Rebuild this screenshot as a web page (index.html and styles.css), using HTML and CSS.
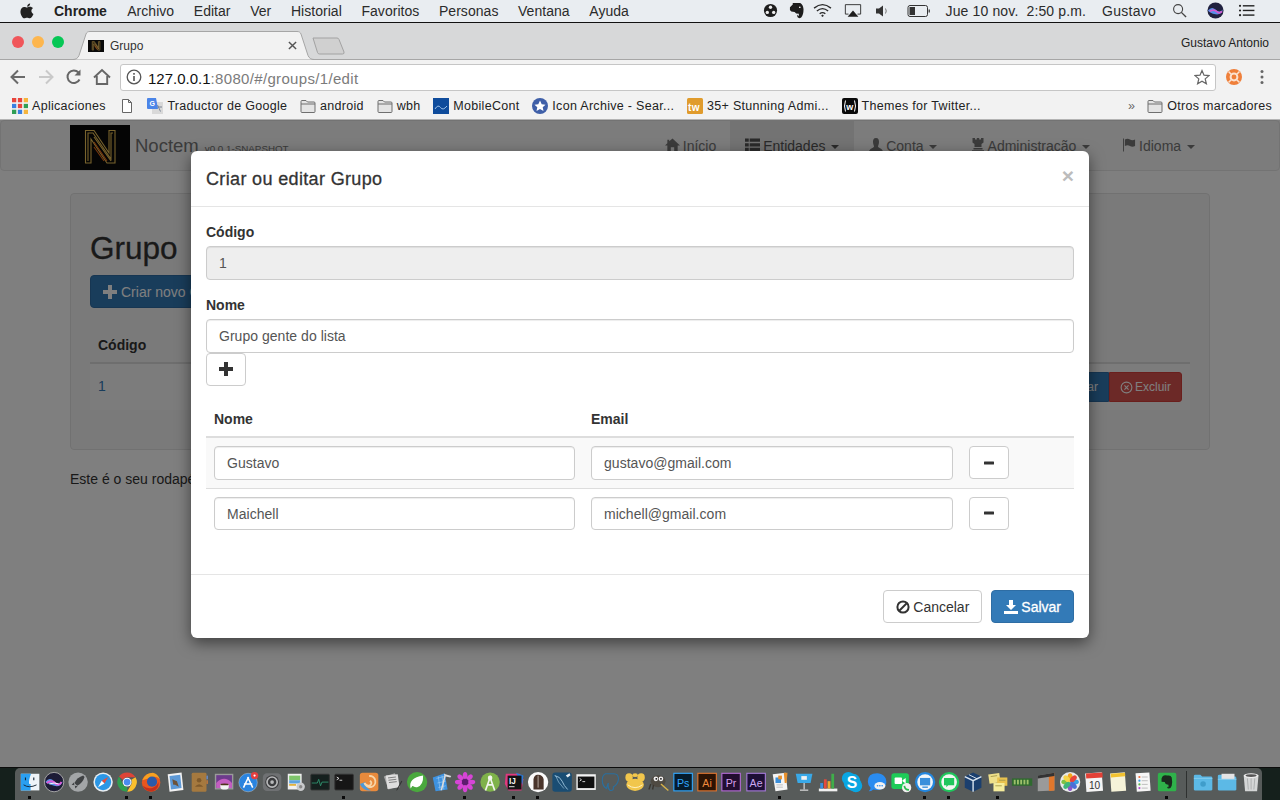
FILE: index.html
```html
<!DOCTYPE html>
<html lang="pt">
<head>
<meta charset="utf-8">
<title>Grupo</title>
<link rel="stylesheet" href="styles.css">
</head>
<body>
<svg class="sprite" width="0" height="0">
  <defs>
    <symbol id="folder" viewBox="0 0 16 14"><path d="M1 12.5V2.5Q1 1.5 2 1.5H6L7.5 3H14Q15 3 15 4V12.5Q15 13.500 14 13.500H2Q1 13.500 1 12.5Z" fill="#e4e4e4" stroke="#6f6f6f"/><path d="M1 5H15" stroke="#6f6f6f" fill="none"/></symbol>
    <symbol id="nlogo" viewBox="0 0 60 45"><rect width="60" height="45" fill="#0a0a0a"/><g fill="none" stroke="#f0c65a" stroke-width="1.100"><path d="M15.500 38V5.500H24L39 28V5.500H45V38H37L21 14V38Z"/><path d="M18 36V8H23L41 34V8H43M24 12L41 36"/></g><path d="M24 17L37 36M24 22L34 36" stroke="#f0701e" stroke-width="1.100" fill="none"/></symbol>
    <symbol id="plus" viewBox="0 0 14 14"><path d="M5 0H9V5H14V9H9V14H5V9H0V5H5Z"/></symbol>
    <symbol id="minus" viewBox="0 0 14 14"><rect x="2" y="5.500" width="10" height="3" rx=".5"/></symbol>
  </defs>
</svg>

<div class="screen">
  <header class="menubar">
    <svg class="apple" viewBox="0 0 16 18"><path d="M11.600 0.500C11.700 2.400 10 4.300 8.200 4.200 8 2.400 9.800 0.600 11.600 0.500ZM8.100 5C9 5 10 4.200 11.600 4.200 12.800 4.200 14 4.800 14.800 5.900 12.200 7.400 12.600 11.200 15.400 12.300 14.500 14.500 12.800 17.400 11.100 17.400 9.900 17.400 9.500 16.600 8 16.600 6.500 16.600 6 17.400 4.900 17.400 2.800 17.400 0.500 13 0.500 9.800 0.500 6.400 2.700 4.300 4.800 4.300 6.200 4.300 7.200 5 8.100 5Z" fill="#222"/></svg>
    <nav class="menus">
      <b>Chrome</b><span>Archivo</span><span>Editar</span><span>Ver</span><span>Historial</span><span>Favoritos</span><span>Personas</span><span>Ventana</span><span>Ayuda</span>
    </nav>
    <div class="status">
      <svg class="st st-ball" viewBox="0 0 16 16"><circle cx="8" cy="8" r="7" fill="#1d1d1d"/><circle cx="8" cy="4.500" r="1.800" fill="#eee"/><circle cx="4.600" cy="10" r="1.800" fill="#eee"/><circle cx="11.400" cy="10" r="1.800" fill="#eee"/></svg>
      <svg class="st st-ele" viewBox="0 0 16 18"><path d="M1 5L4 2V.5H12Q15 2 15.500 7 15.500 13 13 16 10.500 17.500 9 15.500 8.500 14 9 13L10.500 14.500 10.500 12Q7 12 6 10L2.500 9.500 1 8Z" fill="#1d1d1d"/><circle cx="11.500" cy="5" r=".9" fill="#eee"/></svg>
      <svg class="st st-wifi" viewBox="0 0 20 16"><g fill="none" stroke="#2a2a2a" stroke-width="1.500"><path d="M1 5.500Q10 -2 19 5.500"/><path d="M4 8.500Q10 3.500 16 8.500"/><path d="M7 11.500Q10 9 13 11.500"/></g><path d="M8.500 13.500L10 12.300 11.500 13.500 10 15Z" fill="#2a2a2a"/></svg>
      <svg class="st st-air" viewBox="0 0 20 16"><path d="M5 12H1.500V1.500H18.500V12H15" fill="none" stroke="#2a2a2a" stroke-width="1"/><path d="M10 8L16 15H4Z" fill="#1d1d1d"/></svg>
      <svg class="st st-vol" viewBox="0 0 16 16"><path d="M1 5.500H4L8 2.500V13.500L4 10.500H1Z" fill="#333"/><path d="M10.500 5.500Q12 8 10.500 10.500" fill="none" stroke="#777"/></svg>
      <svg class="st st-bat" viewBox="0 0 24 14"><rect x="1" y="1.500" width="19.500" height="11" rx="2" fill="none" stroke="#333"/><rect x="2.500" y="3" width="5.500" height="8" fill="#333"/><rect x="21.500" y="5.500" width="1.500" height="3" fill="#555"/></svg>
      <span class="st-date">Jue 10 nov.&nbsp; 2:50 p.m.</span>
      <span class="st-user">Gustavo</span>
      <svg class="st st-search" viewBox="0 0 16 16"><circle cx="6.500" cy="6.500" r="4.800" fill="none" stroke="#444" stroke-width="1.200"/><path d="M10 10L15 15" stroke="#444" stroke-width="1.500"/></svg>
      <svg class="st st-siri" viewBox="0 0 18 18"><circle cx="9" cy="9" r="8.500" fill="#20213f"/><path d="M1 9Q5 4 9 8T17 8Q15 14 9 13T1 9Z" fill="#5a8ee8"/><path d="M3 10Q7 7 10 10T16 10" stroke="#d55ad0" stroke-width="1.800" fill="none"/></svg>
      <svg class="st st-list" viewBox="0 0 18 14"><g fill="#222"><circle cx="1.500" cy="2" r="1.200"/><circle cx="1.500" cy="7" r="1.200"/><circle cx="1.500" cy="12" r="1.200"/><rect x="4.500" y="1.200" width="12.500" height="1.500"/><rect x="4.500" y="6.200" width="12.500" height="1.500"/><rect x="4.500" y="11.200" width="12.500" height="1.500"/></g></svg>
    </div>
  </header>

  <div class="tabstrip">
    <div class="lights"><i class="red"></i><i class="yellow"></i><i class="green"></i></div>
    <div class="tab">
      <svg class="tab-shape" viewBox="0 0 241 29" preserveAspectRatio="none"><path d="M0 28.500C3 28.500 5 27 6 24.500L13 3C13.700 1.200 15 .5 17 .5H224C226 .5 227.300 1.200 228 3L235 24.500C236 27 238 28.500 241 28.500" fill="#f2f2f2" stroke="#a6a6a6"/></svg>
      <svg class="favicon" viewBox="0 0 60 45"><use href="#nlogo"/></svg>
      <span class="tab-title">Grupo</span>
      <svg class="tab-x" viewBox="0 0 10 10"><path d="M1 1L9 9M9 1L1 9" stroke="#555" stroke-width="1.600"/></svg>
    </div>
    <svg class="newtab" viewBox="0 0 33 18"><path d="M1 1H25Q26.500 1 27 2.500L32 15Q32.500 17 30.500 17H7.500Q6 17 5.500 15.500Z" fill="#d0d0d0" stroke="#a2a2a2"/></svg>
    <span class="profile">Gustavo Antonio</span>
  </div>

  <div class="toolbar">
    <svg class="tb" viewBox="0 0 20 20"><path d="M17 10H4M10 3.500L3.500 10 10 16.500" fill="none" stroke="#6a6a6a" stroke-width="2"/></svg>
    <svg class="tb" viewBox="0 0 20 20"><path d="M3 10H16M10 3.500L16.500 10 10 16.500" fill="none" stroke="#c9c9c9" stroke-width="2"/></svg>
    <svg class="tb" viewBox="0 0 20 20"><path d="M15.500 12.500A6.300 6.300 0 1 1 14.500 5.500" fill="none" stroke="#666" stroke-width="2"/><path d="M16.500 2.500V8.500H10.500Z" fill="#666"/></svg>
    <svg class="tb" viewBox="0 0 20 20"><path d="M2 10.500L10 3 18 10.500M4.800 9V17H15.200V9" fill="none" stroke="#666" stroke-width="1.900"/></svg>
    <div class="omnibox">
      <svg class="info" viewBox="0 0 16 16"><circle cx="8" cy="8" r="6.800" fill="none" stroke="#555" stroke-width="1.300"/><rect x="7.200" y="7" width="1.600" height="5" fill="#555"/><rect x="7.200" y="4" width="1.600" height="1.700" fill="#555"/></svg>
      <span class="url"><span class="url-host">127.0.0.1</span>:8080/#/groups/1/edit</span>
      <svg class="star" viewBox="0 0 16 16"><path d="M8 1.500L10 6.200 15 6.600 11.200 9.900 12.400 14.800 8 12.200 3.600 14.800 4.800 9.900 1 6.600 6 6.200Z" fill="none" stroke="#666" stroke-width="1.200"/></svg>
    </div>
    <svg class="tb" viewBox="0 0 20 20"><circle cx="10" cy="10" r="8" fill="#ef7f3a"/><circle cx="10" cy="10" r="3.400" fill="none" stroke="#fbe2d0" stroke-width="2"/><path d="M4.500 4.500L8 8M15.500 4.500L12 8M4.500 15.500L8 12M15.500 15.500L12 12" stroke="#fbe2d0" stroke-width="1.500"/></svg>
    <svg class="tb" viewBox="0 0 20 20"><g fill="#666"><circle cx="10" cy="4.500" r="1.500"/><circle cx="10" cy="10" r="1.500"/><circle cx="10" cy="15.500" r="1.500"/></g></svg>
  </div>

  <div class="bookmarks">
    <a class="bm"><svg class="bm-i" viewBox="0 0 15 15"><g><rect x="0" y="0" width="4" height="4" fill="#e8453c"/><rect x="5.500" y="0" width="4" height="4" fill="#e8453c"/><rect x="11" y="0" width="4" height="4" fill="#f6b53d"/><rect x="0" y="5.500" width="4" height="4" fill="#3a7fe0"/><rect x="5.500" y="5.500" width="4" height="4" fill="#e8453c"/><rect x="11" y="5.500" width="4" height="4" fill="#2f9e55"/><rect x="0" y="11" width="4" height="4" fill="#2f9e55"/><rect x="5.500" y="11" width="4" height="4" fill="#3a7fe0"/><rect x="11" y="11" width="4" height="4" fill="#f6b53d"/></g></svg><span>Aplicaciones</span></a>
    <a class="bm"><svg class="bm-i" viewBox="0 0 16 16"><path d="M3.500 1.500H9.500L12.500 4.500V14.500H3.500Z M9.500 1.500V4.500H12.500" fill="#fff" stroke="#666"/></svg></a>
    <a class="bm"><svg class="bm-i" viewBox="0 0 16 16"><rect x="5" y="4" width="11" height="12" fill="#d9d9d9"/><path d="M10.500 7L13.500 13.500M9 9H15" stroke="#7a8595"/><path d="M0 1Q0 0 1 0H9L11 11H1Q0 11 0 10Z" fill="#4b85e8"/><text x="2.500" y="8" class="bm-g">G</text></svg><span>Traductor de Google</span></a>
    <a class="bm"><svg class="bm-i"><use href="#folder"/></svg><span>android</span></a>
    <a class="bm"><svg class="bm-i"><use href="#folder"/></svg><span>wbh</span></a>
    <a class="bm"><svg class="bm-i" viewBox="0 0 16 16"><rect width="16" height="16" fill="#0f4c9c"/><path d="M2 11Q5 6 7.500 9.500T14 8" fill="none" stroke="#9dc2ea"/></svg><span>MobileCont</span></a>
    <a class="bm"><svg class="bm-i" viewBox="0 0 16 16"><circle cx="8" cy="8" r="8" fill="#3f5fa8"/><path d="M8 2.500L9.700 6.300 13.500 6.700 10.700 9.300 11.500 13 8 11 4.500 13 5.300 9.300 2.500 6.700 6.300 6.300Z" fill="#fff"/></svg><span>Icon Archive - Sear...</span></a>
    <a class="bm"><svg class="bm-i" viewBox="0 0 16 16"><rect width="16" height="16" rx="1.500" fill="#e09b2c"/><text x="1" y="13" class="bm-tw">tw</text></svg><span>35+ Stunning Admi...</span></a>
    <a class="bm"><svg class="bm-i" viewBox="0 0 16 16"><rect width="16" height="16" rx="2" fill="#0a0a0a"/><text x="8" y="12" class="bm-w">w</text><path d="M3.500 2.500Q1.500 8 3.500 13.500M12.500 2.500Q14.500 8 12.500 13.500" stroke="#fff" fill="none"/></svg><span>Themes for Twitter...</span></a>
    <div class="bm-right">
      <span class="chev">»</span>
      <a class="bm"><svg class="bm-i"><use href="#folder"/></svg><span>Otros marcadores</span></a>
    </div>
  </div>

  <main class="page">
    <div class="navbar">
      <svg class="logo"><use href="#nlogo"/></svg>
      <div class="brand"><span class="brand-name">Noctem</span><small class="brand-ver">v0.0.1-SNAPSHOT</small></div>
      <ul class="navlist">
        <li class="nav-home"><svg class="gl" viewBox="0 0 16 14"><path d="M8 0L16 7.500H13.500V14H9.800V9.500H6.200V14H2.500V7.500H0L2.500 5V1.500H4.500V3Z"/></svg> Início</li>
        <li class="active"><svg class="gl" viewBox="0 0 16 14"><path d="M0 0H4V3.500H0ZM5 0H16V3.500H5ZM0 5H4V8.500H0ZM5 5H16V8.500H5ZM0 10H4V13.500H0ZM5 10H16V13.500H5Z"/></svg> Entidades <i class="caret"></i></li>
        <li><svg class="gl gl-n" viewBox="0 0 14 14"><path d="M7 0C9.500 0 10 2 10 4 10 6 9 8 9 8.500 9 10 14 10.500 14 14H0C0 10.500 5 10 5 8.500 5 8 4 6 4 4 4 2 4.500 0 7 0Z"/></svg> Conta <i class="caret"></i></li>
        <li class="nav-admin"><svg class="gl gl-n" viewBox="0 0 14 14"><path d="M1.500 0H4V1.500H5.800V0H8.200V1.500H10V0H12.500V4.500L10.500 6V9H3.500V6L1.500 4.500ZM2.500 10H11.500V11.500H2.500ZM1 12.300H13V14H1Z"/></svg> Administração <i class="caret"></i></li>
        <li class="nav-lang"><svg class="gl gl-f" viewBox="0 0 14 14"><path d="M0 0H1V14H0ZM2 1Q5 -.5 7.500 1T13 1V8Q10 9.500 7.500 8T2 8Z"/></svg> Idioma <i class="caret"></i></li>
      </ul>
    </div>

    <div class="well">
      <h2 class="page-title">Grupo</h2>
      <button class="btn btn-primary btn-new"><svg class="ic"><use href="#plus"/></svg> Criar novo G</button>
      <div class="list-head"><span>Código</span></div>
      <div class="list-row">
        <a class="link">1</a>
        <div class="row-actions">
          <button class="btn-sm btn-primary">Editar</button>
          <button class="btn-sm btn-danger"><svg class="ic-x" viewBox="0 0 14 14"><circle cx="7" cy="7" r="5.800" fill="none" stroke="currentColor" stroke-width="1.200"/><path d="M4.800 4.800L9.200 9.200M9.200 4.800L4.800 9.200" stroke="currentColor" stroke-width="1.200"/></svg> Excluir</button>
        </div>
      </div>
    </div>
    <p class="foot">Este é o seu rodapé</p>

    <div class="backdrop">
      <section class="modal">
        <div class="modal-header">
          <h4 class="modal-title">Criar ou editar Grupo</h4>
          <span class="close">×</span>
        </div>
        <div class="modal-body">
          <div class="group">
            <label class="lbl">Código</label>
            <div class="input disabled">1</div>
          </div>
          <label class="lbl">Nome</label>
          <div class="input">Grupo gente do lista</div>
          <button class="btn btn-default btn-icon"><svg class="ic ic-dark"><use href="#plus"/></svg></button>
          <table class="members">
            <thead>
              <tr><th class="c1">Nome</th><th class="c2">Email</th><th class="c3"></th></tr>
            </thead>
            <tbody>
              <tr class="odd"><td><div class="input">Gustavo</div></td><td><div class="input">gustavo@gmail.com</div></td><td><button class="btn btn-default btn-icon"><svg class="ic ic-dark"><use href="#minus"/></svg></button></td></tr>
              <tr><td><div class="input">Maichell</div></td><td><div class="input">michell@gmail.com</div></td><td><button class="btn btn-default btn-icon"><svg class="ic ic-dark"><use href="#minus"/></svg></button></td></tr>
            </tbody>
          </table>
        </div>
        <div class="modal-footer">
          <button class="btn btn-default"><svg class="ic ic-dark" viewBox="0 0 14 14"><circle cx="7" cy="7" r="5.600" fill="none" stroke="#333" stroke-width="2"/><path d="M3 11L11 3" stroke="#333" stroke-width="2"/></svg> Cancelar</button>
          <button class="btn btn-primary btn-save"><svg class="ic" viewBox="0 0 14 14"><path d="M5 0H9V5H12L7 10 2 5H5ZM0 11H14V14H0Z"/></svg> Salvar</button>
        </div>
      </section>
    </div>
  </main>

  <footer class="desk">
    <div class="dock">
      <div class="di on"><svg viewBox="0 0 24 24"><rect x="2" y="3" width="20" height="18" fill="#eef3f8"/><path d="M2 3H13Q10 11 11 14H12.500L12.500 21H2Z" fill="#2a9ff0"/><path d="M7 7V10M16 7V10" stroke="#123" stroke-width="1.200"/><path d="M5 15Q11 19 19 15" fill="none" stroke="#123"/></svg></div>
      <div class="di"><svg viewBox="0 0 24 24"><circle cx="12" cy="12" r="10.500" fill="#1d1c36" stroke="#aaa"/><path d="M2.500 12Q7 6 12 11T21.500 11Q19 18 12 16T2.500 12Z" fill="#5c93e8"/><path d="M4 13Q9 9 13 13T20 12" stroke="#e05ad6" stroke-width="2" fill="none"/><path d="M7 14Q12 12 17 14" stroke="#fff" fill="none"/></svg></div>
      <div class="di"><svg viewBox="0 0 24 24"><circle cx="12" cy="12" r="10.500" fill="#a3a6a8"/><path d="M17.500 5Q11 7 8 13L11 16Q17 13 19 6.500Z" fill="#3f4244"/><path d="M7.500 12.500L5 15 8 15.500M11.500 16.500L9 19 8.500 16Z" fill="#3f4244"/></svg></div>
      <div class="di"><svg viewBox="0 0 24 24"><circle cx="12" cy="12" r="10.500" fill="#e8eef2"/><circle cx="12" cy="12" r="8.800" fill="#2b97e6"/><path d="M17.500 6.500L13.500 13.500 10.500 10.500Z" fill="#e74c3c"/><path d="M6.500 17.500L10.500 10.500 13.500 13.500Z" fill="#fff"/></svg></div>
      <div class="di on"><svg viewBox="0 0 24 24"><path d="M12 1.500A10.500 10.500 0 0 1 21.100 6.750H12A5.250 5.250 0 0 0 7.500 9.400L3.300 6Q6.500 1.500 12 1.500Z" fill="#df4437"/><path d="M21.100 6.750A10.500 10.500 0 0 1 12 22.500L16.500 14.600A5.250 5.250 0 0 0 16.500 9.400Z" fill="#fbc02d"/><path d="M12 22.500A10.500 10.500 0 0 1 3.300 6L7.500 14.600A5.250 5.250 0 0 0 12 17.250Z" fill="#2f9e50"/><circle cx="12" cy="12" r="4.800" fill="#fff"/><circle cx="12" cy="12" r="3.700" fill="#4a8cf0"/></svg></div>
      <div class="di on"><svg viewBox="0 0 24 24"><circle cx="12" cy="12.500" r="10" fill="#e8561f"/><path d="M2.500 10Q6 2 14 2 19 3 21.500 9 17 5 13 7 8 8 2.500 10Z" fill="#f6a021"/><circle cx="13" cy="11.500" r="5.500" fill="#2c5aa8"/><path d="M3 16Q8 20 14 18 18 17 20 12 21 19 14 22 6 23 3 16Z" fill="#c4301c"/></svg></div>
      <div class="di"><svg viewBox="0 0 24 24"><path d="M4 3.500L19 1.500 21 20.500 6 22.500Z" fill="#f2f2f2"/><path d="M6 5.500L17.500 4 19 18.500 7.500 20Z" fill="#5d99d6"/><path d="M9 9L14 11 16 17 12 15 10 15Z" fill="#6d5238"/></svg></div>
      <div class="di"><svg viewBox="0 0 24 24"><rect x="4" y="2" width="16" height="20.500" rx="1.500" fill="#a5793f"/><rect x="20" y="5" width="1.500" height="4" fill="#6b8fcf"/><rect x="20" y="10" width="1.500" height="4" fill="#c87a3a"/><circle cx="12" cy="10" r="2.500" fill="#7f5a2c"/><path d="M7.500 17Q12 11.500 16.500 17Z" fill="#7f5a2c"/></svg></div>
      <div class="di"><svg viewBox="0 0 24 24"><rect x="2" y="3" width="20" height="17" fill="#9a9a9a"/><rect x="3.500" y="4.500" width="17" height="14" fill="#6d3b8c"/><path d="M3.500 13Q12 4 20.500 13V18.500H3.500Z" fill="#c45ec0"/><path d="M8 14H17V17Q17 20 14 20H11Q8 20 8 17Z" fill="#f3f3f3"/><ellipse cx="12.500" cy="14.500" rx="4.500" ry="1" fill="#50321c"/></svg></div>
      <div class="di"><svg viewBox="0 0 24 24"><circle cx="12" cy="12.500" r="10" fill="#2a84df" stroke="#bcd" stroke-width=".5"/><path d="M12.500 6.500L7 18M11.500 6.500L17 18M7.500 14H16.500" stroke="#fff" stroke-width="1.700" fill="none"/><circle cx="19" cy="5" r="4" fill="#e43f3f"/><circle cx="19" cy="5" r="1.200" fill="#fff"/></svg></div>
      <div class="di"><svg viewBox="0 0 24 24"><rect x="2" y="2.500" width="20" height="19" rx="4.500" fill="#6f7173"/><circle cx="12" cy="12" r="7.500" fill="#3b3c3e"/><circle cx="12" cy="12" r="5.500" fill="none" stroke="#b8b9ba" stroke-width="1.800"/><circle cx="12" cy="12" r="2" fill="#b8b9ba"/></svg></div>
      <div class="di"><svg viewBox="0 0 24 24"><rect x="3" y="3" width="15" height="17" fill="#f0f0f0"/><rect x="4.500" y="5" width="12" height="5" fill="#7ec46b"/><rect x="4.500" y="10" width="12" height="3.500" fill="#5ca3e0"/><path d="M4.500 15H12" stroke="#e2b23d" stroke-width="2"/><circle cx="17" cy="17" r="4.500" fill="#c8cacc"/><circle cx="17" cy="17" r="1.800" fill="#888"/></svg></div>
      <div class="di"><svg viewBox="0 0 24 24"><rect x="2" y="3.500" width="20" height="17" rx="1" fill="#15201e" stroke="#333"/><path d="M3 13H9L10.500 9 12.500 16 14 12H21" stroke="#2f8f6c" fill="none"/></svg></div>
      <div class="di on"><svg viewBox="0 0 24 24"><rect x="2" y="3.500" width="20" height="17" rx="1" fill="#161616" stroke="#333"/><path d="M4 6.500L6.500 8 4 9.500" stroke="#ddd" fill="none"/><path d="M7 10H10" stroke="#ddd"/></svg></div>
      <div class="di"><svg viewBox="0 0 24 24"><rect x="2" y="2" width="20" height="20" rx="3" fill="#e88a3c"/><path d="M2 14Q6 22 14 21 7 18 8 12Z" fill="#4d98d9"/><path d="M12 5.500A6 6 0 1 1 7 13Q9 17 13 15.500 16 13 13 10.500" fill="none" stroke="#f7d5a8" stroke-width="2"/></svg></div>
      <div class="di"><svg viewBox="0 0 24 24"><path d="M2 6L14 2.500 19 16 7 20Z" fill="#a9a9a9"/><path d="M4 5L17 3.500 19 17.500 6 19.500Z" fill="#dedede"/><path d="M6.500 7.500L15 6.500M7 10L15.500 9M7.500 12.500L16 11.500" stroke="#777"/><path d="M22 11L17 20 15.500 21.500 16 19.500 21 10.500Z" fill="#333"/></svg></div>
      <div class="di"><svg viewBox="0 0 24 24"><circle cx="12" cy="12" r="11" fill="#4aa83e"/><path d="M5 19Q2 8 18.500 5 19 16 12 17.500 9 18 7 16Q11 10 15 9.500 10 11 5 19Z" fill="#fff"/></svg></div>
      <div class="di"><svg viewBox="0 0 24 24"><path d="M3 7L16 2.500 19 20 6 22Z" fill="#3e92e0"/><path d="M7 8L15 6M8 13L17 11M9 18L17 16M9 6L11 21M13 5L15 20" stroke="#a8d2f4" stroke-width=".6"/><path d="M15 3L23 5.500 22 7 17 6 13 21 11.500 20.500 15.500 5Z" fill="#ddd"/></svg></div>
      <div class="di on"><svg viewBox="0 0 24 24"><g fill="#d645d6"><ellipse cx="12" cy="5" rx="2.500" ry="4"/><ellipse cx="12" cy="19" rx="2.500" ry="4"/><ellipse cx="5" cy="12" rx="4" ry="2.500"/><ellipse cx="19" cy="12" rx="4" ry="2.500"/><ellipse cx="7" cy="7" rx="2.500" ry="3.800" transform="rotate(-45 7 7)"/><ellipse cx="17" cy="7" rx="2.500" ry="3.800" transform="rotate(45 17 7)"/><ellipse cx="7" cy="17" rx="2.500" ry="3.800" transform="rotate(45 7 17)"/><ellipse cx="17" cy="17" rx="2.500" ry="3.800" transform="rotate(-45 17 17)"/></g><circle cx="12" cy="12" r="3.500" fill="#5e1b70"/></svg></div>
      <div class="di"><svg viewBox="0 0 24 24"><circle cx="12" cy="12" r="10.500" fill="#7fb24a"/><path d="M7 21L12 7 17 21M8.500 15H15.500" fill="none" stroke="#f2f5ee" stroke-width="1.800"/><circle cx="12" cy="7.500" r="2.500" fill="#f2f5ee"/></svg></div>
      <div class="di on"><svg viewBox="0 0 24 24"><path d="M3 3H18L22 9 20 21H6L2 14Z" fill="#e0397f"/><path d="M14 2L22 5 21 15Z" fill="#2b7bd9"/><rect x="5" y="5" width="15" height="15" fill="#141414"/><text x="6.500" y="14" class="d-ij">IJ</text><rect x="6.500" y="16.500" width="6" height="1" fill="#eee"/></svg></div>
      <div class="di on"><svg viewBox="0 0 24 24"><circle cx="12" cy="12" r="11" fill="#fafafa"/><path d="M7 20V9Q8 3.500 12 4 17 4 18 9V20Z" fill="#4a352b"/><path d="M12 5V18" stroke="#d9cfc8" stroke-width=".8"/></svg></div>
      <div class="di"><svg viewBox="0 0 24 24"><rect x="1.500" y="1.500" width="21" height="21" rx="3" fill="#1a4d73"/><path d="M4 5Q10 6 12 11T18 20" stroke="#9ec5de" stroke-width="1" fill="none"/><path d="M5 5Q7 12 14 19" stroke="#9ec5de" stroke-width=".7" fill="none"/><path d="M16 5L20 2.500 21 4.500 18 7Z" fill="#e8eef2"/></svg></div>
      <div class="di"><svg viewBox="0 0 24 24"><rect x="1.500" y="3.500" width="21" height="17" fill="#f3f3f3"/><rect x="3" y="6" width="18" height="12.500" fill="#101010"/><path d="M5 8L7 9.500 5 11M8 11.500H11" stroke="#ddd" fill="none"/></svg></div>
      <div class="di"><svg viewBox="0 0 24 24"><path d="M6 3Q2 5 2.500 11T7 19Q8 15 9 13 8 19 11 21 15 22 14.500 17 19 15 20 9 20 3 15 3 11 3 6 3Z" fill="none" stroke="#2a6f9e" stroke-width="1.200"/></svg></div>
      <div class="di"><svg viewBox="0 0 24 24"><ellipse cx="12" cy="15" rx="9.500" ry="6.500" fill="#f1c64c"/><ellipse cx="5.500" cy="7" rx="4" ry="4.500" fill="#f1c64c"/><ellipse cx="18.500" cy="7" rx="4" ry="4.500" fill="#f1c64c"/><ellipse cx="12" cy="4.500" rx="3" ry="2" fill="#f1c64c"/><path d="M4 15Q12 21 20 15" stroke="#fff3c4" fill="none"/></svg></div>
      <div class="di"><svg viewBox="0 0 24 24"><ellipse cx="11" cy="11" rx="8" ry="6.500" fill="#4f4a42"/><circle cx="8.500" cy="8.500" r="2.500" fill="#f1f1f1"/><circle cx="14" cy="8.500" r="2.500" fill="#f1f1f1"/><circle cx="9" cy="8.500" r="1" fill="#111"/><circle cx="14" cy="8.500" r="1" fill="#111"/><path d="M14 14L22 21" stroke="#d9b44a" stroke-width="1.500"/><path d="M3 14L1 20M6 15L5 20" stroke="#3a362f" stroke-width="1.500"/></svg></div>
      <div class="di"><svg viewBox="0 0 24 24"><rect x="2" y="2.500" width="20" height="19" fill="#061c2c" stroke="#31a8ff" stroke-width="1.200"/><text x="12" y="17" class="d-ad d-ps">Ps</text></svg></div>
      <div class="di"><svg viewBox="0 0 24 24"><rect x="2" y="2.500" width="20" height="19" fill="#2b1304" stroke="#e0752f" stroke-width="1.200"/><text x="12" y="17" class="d-ad d-ai">Ai</text></svg></div>
      <div class="di"><svg viewBox="0 0 24 24"><rect x="2" y="2.500" width="20" height="19" fill="#230d30" stroke="#b56bd6" stroke-width="1.200"/><text x="12" y="17" class="d-ad d-pr">Pr</text></svg></div>
      <div class="di"><svg viewBox="0 0 24 24"><rect x="2" y="2.500" width="20" height="19" fill="#1d0f36" stroke="#a67ad9" stroke-width="1.200"/><text x="12" y="17" class="d-ad d-ae">Ae</text></svg></div>
      <div class="di on"><svg viewBox="0 0 24 24"><path d="M4 3.500L18 2 20 20 7 22Z" fill="#f4f4f4"/><path d="M16 2H20L19 13 17 13Z" fill="#e8912d"/><rect x="7" y="7" width="6" height="6" fill="#3b8fd9"/><rect x="10" y="5" width="4" height="4" fill="#e8912d"/><path d="M8 15H15M8 17.500H15" stroke="#bbb"/></svg></div>
      <div class="di"><svg viewBox="0 0 24 24"><path d="M3 3H21L19 13H5Z" fill="#39a9e8"/><rect x="9" y="5.500" width="6" height="4" fill="#f1f1f1"/><rect x="11.300" y="13" width="1.500" height="7" fill="#c8c8c8"/><rect x="7.500" y="20" width="9" height="1.500" fill="#c8c8c8"/></svg></div>
      <div class="di"><svg viewBox="0 0 24 24"><rect x="2" y="19" width="20" height="3" fill="#f1f1f1"/><rect x="3.500" y="13" width="3" height="6" fill="#3d8fdc"/><rect x="7.500" y="9" width="3" height="10" fill="#e54a3c"/><rect x="11.500" y="11" width="3" height="8" fill="#f0a92e"/><rect x="15.500" y="3" width="3" height="16" fill="#3fae4a"/></svg></div>
      <div class="di"><svg viewBox="0 0 24 24"><circle cx="8" cy="8" r="7" fill="#0aa6e2"/><circle cx="16" cy="16" r="7" fill="#0aa6e2"/><rect x="3" y="3" width="18" height="18" rx="8" fill="#0aa6e2"/><text x="12" y="18" class="d-s">S</text></svg></div>
      <div class="di"><svg viewBox="0 0 24 24"><path d="M12 2.500C18 2.500 22 6.500 22 11.500S18 20.500 12 20.500Q9.500 20.500 8 20 5.500 22 3 22 5 20 5 18 2 15.500 2 11.500 2 2.500 12 2.500Z" fill="#2a8cf0"/><ellipse cx="15" cy="16" rx="6" ry="4" fill="#f2f2f2"/><circle cx="12.500" cy="16" r=".9" fill="#2a8cf0"/><circle cx="15" cy="16" r=".9" fill="#2a8cf0"/><circle cx="17.500" cy="16" r=".9" fill="#2a8cf0"/></svg></div>
      <div class="di"><svg viewBox="0 0 24 24"><rect x="1.500" y="2.500" width="19" height="17" rx="3" fill="#1ecb58"/><rect x="5" y="7" width="8" height="7" rx="1" fill="#fff"/><path d="M13.500 10L17 7.500V13.500L13.500 11Z" fill="#fff"/><circle cx="18" cy="18" r="5" fill="#f1f1f1"/><path d="M15.500 16Q16 20 20.500 20.500" stroke="#2db84d" stroke-width="1.800" fill="none"/></svg></div>
      <div class="di on"><svg viewBox="0 0 24 24"><circle cx="12" cy="12" r="11" fill="#2386de"/><circle cx="12" cy="12" r="8.500" fill="#f2f6fa"/><rect x="6.500" y="7.500" width="11" height="8" fill="#3a8fdb"/><path d="M9 17.500H15" stroke="#3a8fdb" stroke-width="1.500"/></svg></div>
      <div class="di on"><svg viewBox="0 0 24 24"><circle cx="12" cy="12" r="11" fill="#1fc65c"/><circle cx="12" cy="12" r="8.500" fill="#f2f6f2"/><path d="M6.500 7.500H17.500V15.500H11L9 17.500V15.500H6.500Z" fill="#1fc65c"/></svg></div>
      <div class="di"><svg viewBox="0 0 24 24"><path d="M12 1.500L21 6V18L12 22.500 3 18V6Z" fill="#1b3f6e"/><path d="M3 6L12 10.500 21 6M12 10.500V22.500" stroke="#d9e4ef" stroke-width="1.500" fill="none"/><path d="M7.500 4L16.500 8.500" stroke="#d9e4ef"/></svg></div>
      <div class="di on"><svg viewBox="0 0 24 24"><rect x="2" y="3" width="12" height="10" fill="#efe08a" transform="rotate(-8 8 8)"/><rect x="11" y="7" width="11" height="9" fill="#e9c24f"/><rect x="7" y="13" width="12" height="9" fill="#f5ec9c"/><path d="M4 6L11 5M9 16H16M13 10H20" stroke="#a79a4a"/></svg></div>
      <div class="di"><svg viewBox="0 0 24 24"><rect x="1" y="8" width="22" height="8" fill="#2f6a2f"/><g fill="#9ec06a"><rect x="3" y="9.500" width="2" height="5"/><rect x="6.500" y="9.500" width="2" height="5"/><rect x="10" y="9.500" width="2" height="5"/><rect x="13.500" y="9.500" width="2" height="5"/><rect x="17" y="9.500" width="2" height="5"/></g></svg></div>
      <div class="di"><svg viewBox="0 0 24 24"><path d="M3 5L21 2V21L3 22Z" fill="#9a9a9a"/><path d="M15 3.500L21 2V21L15 21.500Z" fill="#e0772c"/><path d="M3 5L21 2V5.500L3 8Z" fill="#333"/></svg></div>
      <div class="di"><svg viewBox="0 0 24 24"><circle cx="12" cy="12" r="11" fill="#e9e9e9"/><g><ellipse cx="12" cy="7" rx="2.700" ry="4.500" fill="#f3a51e"/><ellipse cx="17" cy="12" rx="4.500" ry="2.700" fill="#3aa1e0"/><ellipse cx="12" cy="17" rx="2.700" ry="4.500" fill="#8a56c8"/><ellipse cx="7" cy="12" rx="4.500" ry="2.700" fill="#7fc243"/><ellipse cx="8.500" cy="8.500" rx="2.700" ry="4.500" fill="#f8d648" transform="rotate(-45 8.500 8.500)"/><ellipse cx="15.500" cy="8.500" rx="2.700" ry="4.500" fill="#e8443c" transform="rotate(45 15.500 8.500)"/><ellipse cx="15.500" cy="15.500" rx="2.700" ry="4.500" fill="#4a6fd8" transform="rotate(-45 15.500 15.500)"/><ellipse cx="8.500" cy="15.500" rx="2.700" ry="4.500" fill="#3fb57a" transform="rotate(45 8.500 15.500)"/></g></svg></div>
      <div class="di"><svg viewBox="0 0 24 24"><rect x="3" y="2" width="18" height="20" transform="rotate(-4 12 12)" fill="#f5f5f5"/><path d="M3.200 2.800L21 1.500 21.300 7 3.500 8.200Z" fill="#e34136"/><text x="12.500" y="19.500" class="d-cal">10</text></svg></div>
      <div class="di"><svg viewBox="0 0 24 24"><rect x="4" y="2" width="16" height="20" transform="rotate(-4 12 12)" fill="#f6f3d8"/><path d="M4 3L19.500 1.800 19.800 5.800 4.300 7Z" fill="#f2c230"/></svg></div>
      <div class="di"><svg viewBox="0 0 24 24"><rect x="4.500" y="2" width="15" height="20" transform="rotate(-4 12 12)" fill="#f6f6f6"/><g><circle cx="8" cy="6.500" r="1.200" fill="#ef6d3a"/><circle cx="8" cy="10.500" r="1.200" fill="#3f9fe0"/><circle cx="8" cy="14.500" r="1.200" fill="#5cb84e"/><circle cx="8" cy="18.500" r="1.200" fill="#b84ed0"/></g><path d="M10.500 6.500H17M10.500 10.500H17M10.500 14.500H17M10.500 18.500H17" stroke="#bbb"/></svg></div>
      <div class="di on"><svg viewBox="0 0 24 24"><rect x="2" y="2" width="20" height="20" rx="2" fill="#2fb24a"/><path d="M7 6Q9 4 12 5 16 4 17 7 18 12 17 16 16 19 14 19 12 19 12 17L13.500 17.500 13.500 15Q10 15 9.500 12L6 11.500V8Z" fill="#1b2a1e"/></svg></div>
      <i class="dock-sep"></i>
      <div class="di"><svg viewBox="0 0 24 24"><path d="M2 5.500Q2 4 3.500 4H9L11 6H20.500Q22 6 22 7.500V20Q22 21 20.500 21H3.500Q2 21 2 20Z" fill="#5cb9e6"/><path d="M2 8H22" stroke="#85cdef"/><circle cx="12" cy="14" r="3" fill="#3f9dcb"/></svg></div>
      <div class="di"><svg viewBox="0 0 24 24"><path d="M2 5.500Q2 4 3.500 4H9L11 6H20.500Q22 6 22 7.500V20Q22 21 20.500 21H3.500Q2 21 2 20Z" fill="#5cb9e6"/><rect x="6" y="3" width="14" height="6" fill="#e4e4e4"/><path d="M2 9H22" stroke="#85cdef"/></svg></div>
      <div class="di"><svg viewBox="0 0 24 24"><path d="M4 5H20L18.500 22H5.500Z" fill="#d4d6d6"/><ellipse cx="12" cy="5" rx="8" ry="2.500" fill="#efefef"/><ellipse cx="12" cy="5" rx="6" ry="1.500" fill="#555"/><path d="M8 8L9 20M12 8V20M16 8L15 20" stroke="#a9acac"/></svg></div>
    </div>
  </footer>
</div>
</body>
</html>
```

FILE: styles.css
```css
* { box-sizing: border-box; }
html, body { margin: 0; padding: 0; }
body { width: 1280px; height: 800px; overflow: hidden; font-family: "Liberation Sans", Arial, sans-serif; }
.sprite { position: absolute; }
.screen { display: flex; flex-direction: column; width: 1280px; height: 800px; }

/* macOS menu bar */
.menubar { flex: 0 0 23px; display: flex; align-items: center; padding: 0 0 1px 20px; background: #e9edf1; border-bottom: 1px solid #111; font-size: 14px; color: #2b2b2b; }
.apple { width: 14px; height: 16px; }
.menus { display: flex; gap: 19.600px; margin-left: 20px; }
.menus b { color: #222; margin-right: .700px; }
.menus span { letter-spacing: .040px; }
.status { display: flex; align-items: center; margin-left: auto; }
.st { display: block; }
.st-ball { width: 15px; height: 15px; margin-right: 11px; }
.st-ele { width: 15px; height: 18px; margin-right: 9px; }
.st-wifi { width: 19px; height: 15px; margin-right: 12px; }
.st-air { width: 18px; height: 15px; margin-right: 13px; }
.st-vol { width: 16px; height: 16px; margin-right: 16px; }
.st-bat { width: 24px; height: 14px; margin-right: 15px; }
.st-date { margin-right: 16px; letter-spacing: .140px; }
.st-user { margin-right: 16px; letter-spacing: .250px; }
.st-search { width: 15px; height: 15px; margin-right: 20px; }
.st-siri { width: 17px; height: 17px; margin-right: 14px; }
.st-list { width: 18px; height: 13px; margin-right: 24px; }

/* Tab strip */
.tabstrip { flex: 0 0 37px; display: flex; align-items: flex-end; padding-left: 12px; background: #d7d8d9; border-bottom: 1px solid #a6a6a6; }
.lights { display: flex; gap: 8px; align-self: flex-start; margin-top: 13px; }
.lights i { display: block; width: 12px; height: 12px; border-radius: 50%; }
.lights .red { background: #f0565a; }
.lights .yellow { background: #fdb64e; }
.lights .green { background: #06c755; }
.tab { position: relative; display: flex; align-items: center; width: 241px; height: 29px; margin: 0 0 -1px 9px; padding: 0 17px 0 15px; font-size: 12px; color: #333; }
.tab-shape { position: absolute; inset: 0; width: 241px; height: 29px; }
.favicon, .tab-title, .tab-x { position: relative; }
.favicon { width: 16px; height: 12px; }
.tab-title { margin-left: 6px; }
.tab-x { width: 9px; height: 9px; margin-left: auto; }
.newtab { width: 33px; height: 18px; margin: 0 0 4px -2px; }
.profile { margin-left: auto; align-self: center; padding: 3px 11px 0 0; font-size: 12px; color: #222; }

/* Toolbar */
.toolbar { flex: 0 0 34px; display: flex; align-items: center; gap: 8px; padding: 0 8px; background: #f2f2f2; }
.tb { flex: none; width: 20px; height: 20px; }
.omnibox { flex: 1; display: flex; align-items: center; height: 27px; padding: 0 5px; background: #fff; border: 1px solid #c6c6c6; border-radius: 3px; }
.info { width: 16px; height: 16px; }
.url { margin-left: 6px; padding-top: 2px; font-size: 15px; letter-spacing: .330px; color: #7b7b7b; }
.url-host { color: #111; letter-spacing: 0; }
.star { width: 16px; height: 16px; margin-left: auto; }

/* Bookmarks */
.bookmarks { flex: 0 0 26px; display: flex; align-items: center; gap: 12.800px; padding: 0 8px 2px 12px; background: #f2f2f2; border-bottom: 1px solid #b4b4b4; font-size: 12.500px; letter-spacing: .300px; color: #222; }
.bm { display: flex; align-items: center; gap: 4px; white-space: nowrap; }
.bm-i { flex: none; width: 16px; height: 16px; }
.bm-g { font-size: 7px; font-weight: bold; fill: #fff; }
.bm-tw { font-size: 10px; font-weight: bold; fill: #fff; }
.bm-w { font-size: 9px; font-weight: bold; fill: #fff; text-anchor: middle; }
.bm-right { display: flex; align-items: center; margin-left: auto; gap: 12px; }
.chev { color: #666; }

/* Application page */
.page { position: relative; flex: 1; overflow: hidden; background: #fff; font-size: 14px; color: #333; }
.navbar { display: flex; align-items: flex-end; height: 51px; margin-bottom: 22px; padding-left: 69px; padding-right: 69px; background: #f8f8f8; border: 1px solid #e7e7e7; border-radius: 4px; }
.logo { width: 60px; height: 45px; }
.brand { display: flex; align-items: baseline; height: 50px; margin-left: 5px; line-height: 51px; color: #777; }
.brand-name { font-size: 18.500px; }
.brand-ver { margin-left: 6px; font-size: 9.800px; }
.navlist { display: flex; height: 50px; margin: 0 0 0 auto; padding: 0; list-style: none; line-height: 52px; color: #777; }
.navlist li { padding: 0 15px; white-space: nowrap; }
.navlist .active { background: #e7e7e7; color: #555; }
.navlist .nav-home { margin-right: -1px; }
.navlist .nav-admin { margin-left: 4px; }
.navlist .nav-lang { margin-left: 3px; }
.gl { width: 15px; height: 14px; margin-right: -1px; fill: currentColor; vertical-align: -1px; }
.gl-n { width: 14px; }
.gl-f { width: 13px; }
.caret { display: inline-block; width: 0; height: 0; margin-left: 2px; vertical-align: 2px; border-top: 4px solid currentColor; border-left: 4px solid transparent; border-right: 4px solid transparent; }

.well { height: 257px; margin: 0 70px; padding: 19px; background: #f5f5f5; border: 1px solid #e3e3e3; border-radius: 4px; }
.page-title { margin: 19px 0 10px; font-size: 31.500px; line-height: 33px; font-weight: 500; -webkit-text-stroke: .3px #333; }
.btn, .btn-sm { display: inline-flex; align-items: center; justify-content: center; gap: 4px; height: 33px; padding: 0 12px; border: 1px solid transparent; border-radius: 4px; font: 14px "Liberation Sans", Arial, sans-serif; }
.btn-primary { background: #337ab7; border-color: #2e6da4; color: #fff; }
.btn-danger { background: #d9534f; border-color: #d43f3a; color: #fff; }
.btn-default { background: #fff; border-color: #ccc; color: #333; }
.btn-sm { gap: 2px; height: 30px; padding: 0 10px; font-size: 12px; border-radius: 0 3px 3px 0; }
.btn-sm.btn-primary { border-radius: 3px 0 0 3px; }
.btn-new { justify-content: flex-start; width: 140px; overflow: hidden; white-space: nowrap; }
.ic { width: 14px; height: 14px; fill: #fff; }
.ic-dark { fill: #333; }
.ic-x { width: 13px; height: 13px; }
.list-head { height: 38px; margin-top: 18px; padding: 9px 8px 7px; border-bottom: 2px solid #ddd; font-weight: bold; line-height: 20px; }
.list-row { display: flex; align-items: center; justify-content: space-between; height: 46px; padding: 0 8px; background: #f9f9f9; }
.link { margin-bottom: 2px; color: #337ab7; }
.row-actions { display: flex; }
.foot { margin: 19px 70px 0; line-height: 20px; }

/* Modal */
.backdrop { position: absolute; inset: 0; display: flex; justify-content: center; align-items: flex-start; padding-top: 31px; background: rgba(0, 0, 0, .5); }
.modal { width: 898px; background: #fff; border-radius: 6px; box-shadow: 0 5px 15px rgba(0, 0, 0, .5); }
.modal-header { display: flex; align-items: flex-start; justify-content: space-between; height: 56px; padding: 16px 15px 14px; border-bottom: 1px solid #e5e5e5; }
.modal-title { margin: 0; font-size: 18px; line-height: 25px; font-weight: 500; letter-spacing: .350px; -webkit-text-stroke: .3px #333; }
.close { margin-top: -4px; font-size: 21px; font-weight: bold; line-height: 25px; color: #bcbcbc; }
.modal-body { padding: 15px; }
.group { margin-bottom: 15.500px; }
.lbl { display: block; margin-bottom: 4px; font-weight: bold; line-height: 20px; }
.input { height: 33.500px; padding: 0 12px; background: #fff; border: 1px solid #ccc; border-radius: 4px; box-shadow: inset 0 1px 1px rgba(0, 0, 0, .075); line-height: 32px; letter-spacing: .030px; color: #555; }
.input.disabled { background: #eee; }
.btn-icon { display: flex; width: 40px; padding: 0; }
.members { width: 868px; margin: 14.500px 0 21px; border-collapse: collapse; table-layout: fixed; }
.c1 { width: 377px; }
.c2 { width: 378px; }
.members th { padding: 9px 8px 7px; border-bottom: 2px solid #ddd; font-weight: bold; line-height: 20px; text-align: left; }
.members td { padding: 8px; border-top: 1px solid #ddd; }
.members thead + tbody tr:first-child td { border-top: 0; }
.odd { background: #f9f9f9; }
.modal-footer { display: flex; justify-content: flex-end; gap: 9px; padding: 15px; border-top: 1px solid #e5e5e5; }
.modal-footer .btn { gap: 3px; }
.btn-save { -webkit-text-stroke: .3px #fff; }

/* Dock */
.desk { flex: 0 0 33px; padding-left: 15px; padding-right: 18px; background: #15201c; border-top: 1px solid #0c0c0c; }
.dock { display: flex; height: 32px; padding: 3px 0 0 3px; background: #575b5a; border-radius: 5px 5px 0 0; }
.di { position: relative; flex: 0 0 24.100px; height: 24px; padding: 0 1px; }
.di svg { display: block; width: 22.200px; height: 22.200px; }
.di.on::after { content: ""; position: absolute; left: 10px; top: 25px; width: 3px; height: 3px; background: #0a0a0a; }
.dock-sep { flex: none; width: 1px; height: 27px; margin: 0 4px 0 7px; background: #2e3130; }
.d-ad { font-size: 11.500px; text-anchor: middle; }
.d-ps { fill: #31a8ff; }
.d-ai { fill: #f08a3c; }
.d-pr { fill: #d9a0ef; }
.d-ae { fill: #c9a8f2; }
.d-ij { font-size: 9px; font-weight: bold; fill: #f2f2f2; }
.d-s { font-size: 17px; font-weight: bold; fill: #fff; text-anchor: middle; }
.d-cal { font-size: 11px; fill: #333; text-anchor: middle; }
```
